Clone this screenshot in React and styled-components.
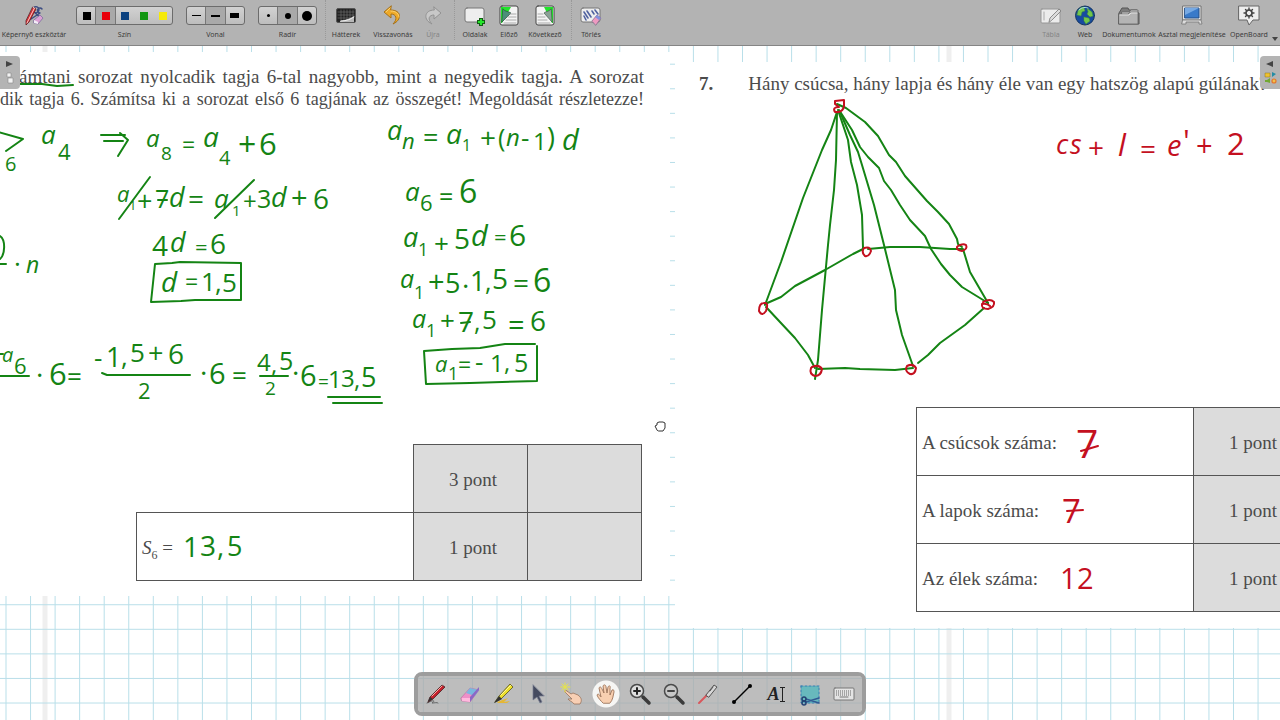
import React from "react";
import styled, { createGlobalStyle, css } from "styled-components";

const INK_GREEN = "#148414";
const INK_RED = "#c4101f";

const GlobalStyle = createGlobalStyle`
  * { box-sizing: border-box; }
  body { margin: 0; overflow: hidden; background: #fff; }
  button { font: inherit; color: inherit; border: 0; padding: 0; background: none; cursor: pointer; }
`;

const Window = styled.div`
  display: flex;
  flex-direction: column;
  height: 100vh;
  font-family: "Noto Sans", "Open Sans", sans-serif;
`;

/* top toolbar */
const TopBar = styled.header`
  display: flex;
  flex: none;
  height: 46px;
  padding-top: 5px;
  background: #b3b3b3;
  border-bottom: 1px solid #858585;
`;

const BarItems = styled.div`
  display: flex;
  gap: ${(props) => props.$gap || 0}px;
  margin-left: ${(props) => (props.$end ? "auto" : "0")};
`;

const ToolButton = styled.button`
  display: flex;
  flex-direction: column;
  align-items: center;
  width: ${(props) => props.$width}px;
  font-size: 7px;
  line-height: 10px;
  white-space: nowrap;
  color: #3c3c3c;
  svg {
    width: 22px;
    height: 22px;
    margin-bottom: 3px;
  }
  &:disabled {
    color: #858585;
    cursor: default;
  }
`;

const Separator = styled.div`
  width: 1px;
  height: 40px;
  margin-top: -5px;
  margin-left: ${(props) => props.$space}px;
  border-left: 1px dotted #999;
`;

const Picker = styled.div`
  display: flex;
  flex-direction: column;
  align-items: center;
  gap: 5px;
  margin-left: 13px;
  padding-top: 1px;
  font-size: 7px;
  line-height: 10px;
  color: #3c3c3c;
  &:first-of-type {
    margin-left: 8px;
  }
`;

const PickerRow = styled.div`
  display: flex;
  height: 19px;
  border: 1px solid #6c6c6c;
  border-radius: 3px;
  background: linear-gradient(#d2d2d2, #bdbdbd);
  overflow: hidden;
`;

const PickerButton = styled.button`
  display: flex;
  align-items: center;
  justify-content: center;
  width: 19px;
  ${(props) =>
    props["aria-pressed"] &&
    css`
      background: #a9a9a9;
      box-shadow: 0 0 0 1px #777;
    `}
`;

const Mark = styled.span`
  width: ${(props) => props.$w}px;
  height: ${(props) => props.$h}px;
  border-radius: ${(props) => (props.$round ? "50%" : "0")};
  background: ${(props) => props.$color || "#000"};
`;

const MenuArrow = styled.button`
  display: flex;
  align-items: center;
  align-self: flex-end;
  width: 8px;
  height: 12px;
  svg { width: 6px; height: 5px; }
`;

/* board */
const Board = styled.main`
  position: relative;
  flex: 1;
  min-height: 0;
  overflow: hidden;
`;

const Layer = styled.svg`
  position: absolute;
  inset: 0;
  width: 100%;
  height: 100%;
  pointer-events: none;
`;

const Pages = styled.div`
  position: relative;
  display: flex;
  align-items: flex-start;
  gap: 5px;
  font-family: "Liberation Serif", "Times New Roman", serif;
  font-size: 19px;
  line-height: 22px;
  color: #4b4b4b;
`;

const Page = styled.section`
  display: flex;
  flex-direction: column;
  min-width: 0;
  background: #fff;
`;

const LeftPage = styled(Page)`
  flex: 0 0 670px;
  margin-top: 6px;
  padding: 14px 28px 15px 0;
`;

const RightPage = styled(Page)`
  flex: 1 0 605px;
  margin-top: 16px;
  padding: 11px 0 16px 24px;
`;

const Line = styled.p`
  margin: 0 -2px 0 ${(props) => props.$indent || 0}px;
  font-size: ${(props) => props.$size}px;
  white-space: nowrap;
  text-align: justify;
  text-align-last: justify;
`;

const Question = styled.p`
  display: flex;
  gap: 35px;
  margin: 0;
  white-space: nowrap;
`;

const ScoreTable = styled.table`
  border-collapse: collapse;
  table-layout: fixed;
  flex: none;
  align-self: ${(props) => props.$align};
  width: 506px;
  margin: ${(props) => props.$margin};
`;

const Cell = styled.td`
  width: ${(props) => (props.$wide ? 277 : 114)}px;
  height: 68px;
  padding: 2px 0 0 5px;
  border: 1px solid #555;
  background: ${(props) => (props.$wide ? "#fff" : "#dcdcdc")};
  text-align: ${(props) => (props.$wide ? "left" : "center")};
  ${(props) =>
    props.$blank &&
    css`
      border-color: transparent #555 #555 transparent;
    `}
  sub {
    font-size: 12px;
    line-height: 0;
  }
`;

const Handwriting = styled.text`
  font-family: "Open Sans", "Noto Sans", sans-serif;
  fill: ${(props) => props.$color};
  tspan.letter { font-style: italic; }
`;

const SideTab = styled.button`
  position: absolute;
  top: 10px;
  ${(props) => props.$side}: 0;
  width: 20px;
  height: 33px;
  border-radius: ${(props) => (props.$side === "left" ? "0 4px 4px 0" : "4px 0 0 4px")};
  background: #b4b4b4;
  svg { display: block; width: 20px; height: 33px; }
`;

const Palette = styled.nav`
  position: absolute;
  bottom: 4px;
  left: 50%;
  transform: translateX(-50%);
  display: flex;
  align-items: center;
  height: 44px;
  padding: 0 1px;
  border: 4px solid #9d9d9d;
  border-radius: 8px;
  background: rgba(170, 170, 170, 0.78);
  background-clip: padding-box;
`;

const PaletteButton = styled.button`
  display: flex;
  align-items: center;
  justify-content: center;
  width: 34px;
  height: 34px;
  svg { width: 24px; height: 24px; }
  ${(props) =>
    props["aria-pressed"] &&
    css`
      background: radial-gradient(circle, #f6f6f4 13px, transparent 14px);
    `}
`;

const Icon = ({ children, size = 22 }) => (
  <svg viewBox={`0 0 ${size} ${size}`} fill="none" strokeLinecap="round" strokeLinejoin="round" aria-hidden="true">
    {children}
  </svg>
);

const icons = {
  kit: (
    <Icon>
      <path d="M10 4a3 3 0 1 1 1 3L18 13M19 4a2.500 2.500 0 1 0-2 4L8 14" stroke="#3c4c82" strokeWidth="1.500" />
      <path d="M10 2 13 4 6 17 3 20 3 16Z" fill="#d9262e" stroke="#5b2024" strokeWidth=".8" />
      <path d="M10 2 11.500 3 4 18" stroke="#f5d6cf" strokeWidth="1" />
      <path d="m11 15 6-5 3 3-5 6-4-1Z" fill="#dba0d4" stroke="#76659b" strokeWidth=".7" />
      <path d="m11 15 4 2 0 2-4-1Z" fill="#f3eef6" />
    </Icon>
  ),
  backgrounds: (
    <Icon>
      <rect x="1.500" y="3.500" width="19" height="14" rx="1.500" fill="#222" stroke="#555" />
      <path d="M3 7h16M3 10h16M3 13h16M6 5v11M9 5v11M12 5v11M15 5v11M18 5v11" stroke="#777" strokeWidth=".6" />
      <path d="M5 16C10 15 14 14 19 11v6H5Z" fill="#b8b8b8" />
      <path d="M6 16c6 0 10-2 13-4" stroke="#eee" />
    </Icon>
  ),
  undo: (
    <Icon>
      <path d="M9 1 2 7l7 6V9c5 0 7 5 2 10 9-4 9-14-2-14Z" fill="#efaa29" stroke="#a5711a" strokeWidth="1" />
      <path d="M8 3 4 7M9 6c5 0 8 3 8 6" stroke="#ffdc83" strokeWidth=".8" />
    </Icon>
  ),
  redo: (
    <Icon>
      <path d="m12 2 7 6-7 6v-4c-5 0-7 4-2 9C1 15 2 5 12 5Z" fill="#c8c8c8" stroke="#929292" strokeWidth="1" />
    </Icon>
  ),
  pages: (
    <Icon>
      <rect x="1" y="3" width="19" height="14" rx="2" fill="#eee" stroke="#777" />
      <path d="M17 13v8M13 17h8" stroke="#145c14" strokeWidth="4" strokeLinecap="butt" />
      <path d="M17 14v6M14 17h6" stroke="#25e62c" strokeWidth="2" strokeLinecap="butt" />
    </Icon>
  ),
  previous: (
    <Icon>
      <rect x="2" y="1" width="18" height="19" rx="2" fill="#f4f4f4" stroke="#454545" />
      <path d="M3 2h10L4 18H3Z" fill="#20e52a" />
      <path d="M5 4c2 3 5 2 8 4L4 17Z" fill="#4c8e79" stroke="#294a3b" strokeWidth=".7" />
      <path d="M12 9h6M10 12h8M8 15h10M6 18h12" stroke="#aaa" />
    </Icon>
  ),
  next: (
    <Icon>
      <rect x="2" y="1" width="18" height="19" rx="2" fill="#f4f4f4" stroke="#454545" />
      <path d="M10 2h9v16h-1Z" fill="#20e52a" />
      <path d="M17 4c-2 3-5 2-7 4l8 9Z" fill="#8ba096" stroke="#46564e" strokeWidth=".7" />
      <path d="M4 9h5M4 12h7M4 15h9M4 18h12" stroke="#aaa" />
    </Icon>
  ),
  erase: (
    <Icon>
      <rect x="1" y="3" width="19" height="14" rx="2" fill="#eee" stroke="#777" />
      <path d="m4 7 4 6M7 6l4 6M12 6l2 3M4 11l2 4M15 5l3 4" stroke="#5062a0" strokeWidth="1.600" />
      <path d="m12 16 5-6 4 3-5 7Z" fill="#ed9ac0" stroke="#7d6287" strokeWidth=".7" />
      <path d="m17 10 4 3-2 2-4-3Z" fill="#8192dc" />
    </Icon>
  ),
  board: (
    <Icon>
      <rect x="1" y="4" width="19" height="14" rx="1" fill="#ececec" stroke="#969696" />
      <path d="M4 7v8" stroke="#aaa" />
      <path d="m9 17 1-4L19 4l2 2-9 9Z" fill="#ddd" stroke="#777" strokeWidth=".8" />
    </Icon>
  ),
  web: (
    <Icon>
      <circle cx="11" cy="10.500" r="9.500" fill="#174aa0" stroke="#16375f" />
      <path d="M4 6c2-4 5-4 6-4l1 4-3 1-1 4-4-1ZM13 3l5 4 1 4-3 1-3-3 1-2ZM10 12l5 1 1 3-4 3-2-3Z" fill="#72c64a" stroke="#3f8b3c" strokeWidth=".5" />
      <path d="M5 5c3-3 7-3 9-2" stroke="#a8d9ef" strokeWidth="1" />
    </Icon>
  ),
  documents: (
    <Icon>
      <path d="M1 8 4 3h6l1 2h8v3l2 0v11H1Z" fill="#7c7c7c" stroke="#555" />
      <path d="M4 7h7l2-2h7v12H4Z" fill="#c9c9c9" stroke="#666" strokeWidth=".8" />
      <path d="M1 9h9l2-2h8v12H1Z" fill="#b4b4b4" stroke="#666" strokeWidth=".8" />
      <path d="M2 10h9l2-2h6" stroke="#e2e2e2" />
    </Icon>
  ),
  desktop: (
    <Icon>
      <path d="M2 1h18v14H2Z" fill="#eee" stroke="#737373" />
      <path d="M4 3h14v10H4Z" fill="#397ac9" stroke="#244f86" />
      <path d="M4 3h14L4 10Z" fill="#77a9e3" />
      <path d="M2 15h18l1 4h-3v-2H5v2H1Z" fill="#ddd" stroke="#777" strokeWidth=".8" />
    </Icon>
  ),
  openboard: (
    <Icon>
      <path d="M1 1h20v14h-6l-4 5-2-5H1Z" fill="#eee" stroke="#666" />
      <circle cx="11" cy="8" r="3" stroke="#444" strokeWidth="1.500" />
      <path d="M11 3v2M11 11v2M6 8h2M14 8h2M7.500 4.500l1.500 1.500M13 10l1.500 1.500M14.500 4.500 13 6M9 10l-1.500 1.500" stroke="#444" strokeWidth="1.400" />
    </Icon>
  ),
  pen: (
    <Icon size={24}>
      <path d="M3 21c6-3 9-3 5 0 3 0 5-1 6 0" stroke="#666" />
      <path d="m4 20 2-5L18 3l3 2L9 17Z" fill="#c3202c" stroke="#462326" strokeWidth=".8" />
      <path d="M8 14 18 4" stroke="#ffaaa4" />
      <path d="m4 20 2-5 3 2Z" fill="#333" />
    </Icon>
  ),
  eraser: (
    <Icon size={24}>
      <path d="m3 16 9-10 9 2-9 12-8-1Z" fill="#ee8fc8" stroke="#b96c9d" strokeWidth=".6" />
      <path d="m12 6 9 2-4 6-9-3Z" fill="#79b7df" />
      <path d="m21 8-9 12v-5l9-10Z" fill="#8c67c5" />
      <path d="m4 16 8 0v4l-8-1Z" fill="#ffb9de" />
    </Icon>
  ),
  marker: (
    <Icon size={24}>
      <path d="m5 20 11-4-4 4 6-1-3 2H6Z" fill="#e5b735" />
      <path d="m3 20 4-6L18 2l3 3L9 17Z" fill="#eee029" stroke="#55521a" strokeWidth=".8" />
      <path d="m2 21 5-7 3 3Z" fill="#333" />
      <path d="M9 13 19 3" stroke="#fff89a" />
    </Icon>
  ),
  arrow: (
    <Icon size={24}>
      <path d="M7 3v15l4-3 3 6 2-1-3-6h5Z" fill="#454b60" stroke="#777d90" strokeWidth=".7" />
    </Icon>
  ),
  pointer: (
    <Icon size={24}>
      <path d="m7 9 4 3 2-1 5 2c4 3 4 6 2 9h-6c-2-3-5-3-6-5l4 0L5 10c-1-2 1-2 2-1Z" fill="#f8cfb4" stroke="#98725c" strokeWidth=".8" />
      <path d="M5 1v9M1 5h9M2 2l6 6M8 2 2 8" stroke="#e8e543" strokeWidth="1" />
    </Icon>
  ),
  hand: (
    <Icon size={24}>
      <path d="M9 21c-2-2-5-5-6-8 1-2 3 0 4 2L5 6c1-2 2-1 3 1l2 4L9 4c1-2 3-1 3 1l1 6 1-6c1-2 3-1 2 1v7l2-5c2-1 2 1 2 2-1 4-1 8-4 11Z" fill="#f8cfb0" stroke="#9c7358" strokeWidth=".9" />
    </Icon>
  ),
  zoomIn: (
    <Icon size={24}>
      <path d="m15 15 6 6" stroke="#3b3b3b" strokeWidth="3.500" />
      <circle cx="9" cy="9" r="6.500" fill="#dedede" stroke="#4a4a4a" strokeWidth="1.500" />
      <path d="M9 6v6M6 9h6" stroke="#222" strokeWidth="2" />
    </Icon>
  ),
  zoomOut: (
    <Icon size={24}>
      <path d="m15 15 6 6" stroke="#3b3b3b" strokeWidth="3.500" />
      <circle cx="9" cy="9" r="6.500" fill="#c8c8c8" stroke="#4a4a4a" strokeWidth="1.500" />
      <path d="M6 9h6" stroke="#444" strokeWidth="2" />
    </Icon>
  ),
  laser: (
    <Icon size={24}>
      <path d="m3 21 9-9" stroke="#d9575c" strokeWidth="2" />
      <path d="m10 13 8-10 3 2-8 10Z" fill="#d8d8d8" stroke="#555" />
      <path d="m14 9 3-4" stroke="#555" />
    </Icon>
  ),
  line: (
    <Icon size={24}>
      <path d="M4 20 20 4" stroke="#000" strokeWidth="1.500" />
      <circle cx="4" cy="20" r="2" fill="#000" />
      <circle cx="20" cy="4" r="2" fill="#000" />
    </Icon>
  ),
  capture: (
    <Icon size={24}>
      <rect x="3" y="4" width="18" height="17" fill="#68b9bd" stroke="#347fb2" strokeDasharray="2 2" />
      <path d="m8 17 13 4M8 20l13-4" stroke="#325a93" strokeWidth="1.600" />
      <circle cx="6" cy="17" r="2" stroke="#244273" strokeWidth="1.500" />
      <circle cx="6" cy="21" r="2" stroke="#244273" strokeWidth="1.500" />
    </Icon>
  ),
  keyboard: (
    <Icon size={24}>
      <rect x="2" y="6" width="20" height="12" rx="1" fill="#e4e4e4" stroke="#777" />
      <path d="M4 9h16M4 11h16M4 13h16" stroke="#666" strokeWidth="1.200" strokeDasharray="1 1" strokeLinecap="butt" />
      <path d="M8 15h8" stroke="#777" />
    </Icon>
  ),
};

const TextToolLabel = styled.span`
  display: flex;
  align-items: center;
  font: italic bold 18px/24px "Liberation Serif", serif;
  color: #222;
  &::after {
    content: "";
    width: 5px;
    height: 15px;
    background: linear-gradient(#222, #222) center / 1px 100% no-repeat,
      linear-gradient(#222, #222) top / 100% 1px no-repeat,
      linear-gradient(#222, #222) bottom / 100% 1px no-repeat;
  }
`;

const colors = [
  ["Fekete", "#000"],
  ["Piros", "#e8000b"],
  ["Kék", "#0b417f"],
  ["Zöld", "#119611"],
  ["Sárga", "#f5ea0a"],
];

const paletteTools = [
  ["Toll", icons.pen],
  ["Radír", icons.eraser],
  ["Kiemelő", icons.marker],
  ["Kijelölés", icons.arrow],
  ["Interakció", icons.pointer],
  ["Görgetés", icons.hand],
  ["Nagyítás", icons.zoomIn],
  ["Kicsinyítés", icons.zoomOut],
  ["Lézer", icons.laser],
  ["Vonal", icons.line],
  ["Szöveg", <TextToolLabel key="a">A</TextToolLabel>],
  ["Kivágás", icons.capture],
  ["Billentyűzet", icons.keyboard],
];

// each formula is a list of [x, baseline, size, characters]
const greenNotes = [
  [[5, 171, 20, "6"], [41, 144, 26, "a"], [58, 160, 22, "4"]],
  [[146, 147, 24, "a"], [161, 160, 19, "8"], [182, 153, 23, "="], [203, 147, 28, "a"], [219, 165, 20, "4"], [238, 156, 32, "+"], [259, 155, 31, "6"]],
  [[117, 202, 22, "a"], [129, 210, 13, "1"], [137, 211, 27, "+"], [155, 208, 25, "7"], [169, 207, 27, "d"], [188, 209, 28, "="], [214, 208, 26, "a"], [232, 216, 15, "1"], [243, 210, 24, "+"], [257, 208, 25, "3"], [271, 207, 27, "d"], [291, 208, 29, "+"], [313, 209, 28, "6"]],
  [[152, 256, 28, "4"], [170, 252, 27, "d"], [195, 255, 22, "="], [210, 254, 28, "6"]],
  [[161, 292, 28, "d"], [185, 290, 23, "="], [201, 291, 26, "1"], [215, 292, 26, ","], [222, 292, 26, "5"]],
  [[14, 273, 26, "·"], [26, 273, 23, "n"]],
  [[2, 362, 20, "a"], [14, 374, 22, "6"], [36, 385, 28, "·"], [49, 385, 31, "6"], [67, 386, 26, "="]],
  [[94, 367, 26, "-"], [106, 367, 27, "1"], [121, 366, 26, ","], [130, 362, 26, "5"], [148, 363, 27, "+"], [168, 364, 28, "6"]],
  [[138, 399, 22, "2"]],
  [[200, 383, 28, "·"], [209, 384, 29, "6"], [232, 385, 26, "="]],
  [[257, 371, 24, "4"], [271, 373, 24, ","], [279, 370, 25, "5"]],
  [[265, 395, 19, "2"]],
  [[292, 383, 28, "·"], [300, 386, 29, "6"], [318, 388, 19, "="], [328, 388, 24, "1"], [341, 387, 24, "3"], [354, 388, 24, ","], [361, 387, 27, "5"]],
  [[387, 140, 27, "a"], [402, 149, 22, "n"], [423, 147, 27, "="], [446, 144, 28, "a"], [462, 151, 16, "1"], [480, 148, 28, "+"], [498, 147, 25, "("], [506, 146, 24, "n"], [521, 147, 26, "-"], [533, 150, 24, "1"], [547, 147, 27, ")"], [562, 150, 29, "d"]],
  [[405, 201, 26, "a"], [420, 211, 22, "6"], [439, 206, 25, "="], [459, 203, 32, "6"]],
  [[403, 247, 27, "a"], [418, 256, 18, "1"], [434, 253, 26, "+"], [454, 249, 28, "5"], [471, 246, 29, "d"], [494, 245, 22, "="], [509, 246, 30, "6"]],
  [[400, 288, 25, "a"], [414, 299, 18, "1"], [428, 292, 29, "+"], [445, 293, 27, "5"], [462, 296, 28, "·"], [470, 291, 27, "1"], [485, 291, 25, ","], [492, 289, 28, "5"], [513, 293, 28, "="], [533, 292, 32, "6"]],
  [[412, 328, 25, "a"], [426, 337, 18, "1"], [440, 330, 26, "+"], [458, 332, 28, "7"], [474, 331, 25, ","], [482, 329, 26, "5"], [508, 335, 29, "="], [530, 331, 28, "6"]],
  [[435, 372, 22, "a"], [448, 380, 18, "1"], [458, 373, 23, "="], [475, 371, 26, "-"], [490, 372, 24, "1"], [504, 371, 24, ","], [514, 372, 25, "5"]],
  [[183, 557, 28, "1"], [200, 556, 28, "3"], [217, 556, 28, ","], [227, 556, 27, "5"]],
];

const redNotes = [
  [[1056, 154, 27, "c"], [1070, 154, 27, "s"], [1088, 158, 28, "+"], [1118, 156, 31, "l"], [1140, 159, 28, "="], [1167, 156, 29, "e"], [1183, 152, 31, "'"], [1196, 156, 29, "+"], [1227, 155, 31, "2"]],
  [[1076, 458, 39, "7"]],
  [[1062, 523, 33, "7"]],
  [[1060, 589, 29, "1"], [1077, 589, 29, "2"]],
];

const greenStrokes = [
  "M20 84 42 84 57 86 73 85",
  "M-2 132 23 139 6 151",
  "M101 135H125M104 141H123M120 133l8 7-10 16",
  "M150 177 119 219M254 180 215 218",
  "M158 200h9M461 323l9-1",
  "M155 264 172 263 180 262 241 263V300L195 300 181 301 151 302Z",
  "M0 236c6 4 5 19 0 23M0 264h6",
  "M0 354h3M0 376h29M102 373l5 2h83M260 376h28",
  "M328 397h52M333 403h49",
  "M424 351 452 349 480 348 505 344 535 344M537 346V381L470 383 426 384 424 351",
  "M837 112 831 130 822 150 803 198 781 262 765 305",
  "M837 112 836 160 834 190 830 225 828 245 822 310 818 360 815 379",
  "M838 110 848 140 851 162 857 185 862 215 863 248",
  "M840 112 850 135 858 152 862 165 874 205 884 245 895 290 896 310 902 335 913 366",
  "M839 110 852 130 860 147 868 157 879 168 884 181 891 190 900 205 910 220 925 236 931 249 941 264 950 275 962 287 988 303",
  "M837 104 846 108 865 122 878 136 889 155 896 162 905 176 927 201 938 212 949 224 957 239 958 244 962 247",
  "M765 304 781 297 795 286 825 270 853 254 863 249",
  "M868 249 890 247 920 247 950 249 963 249 970 272 988 303",
  "M984 308 965 325 940 343 928 355 918 363",
  "M913 368 895 370 860 369 845 368 818 369",
  "M766 307 780 322 795 338 808 355 815 368",
];

const redStrokes = [
  "M835 101l9-1v6q-1 7-9 6-3-5 4-5l-4-3Z",
  "M764 303q-5 0-5 8 3 6 7 0 3-9-2-8Z",
  "M812 367q7-3 10 2-1 7-7 7-6-2-4-8Z",
  "M907 366q6-3 9 2-1 7-6 6-6-3-3-8Z",
  "M864 248q6-2 7 3-2 6-6 5-4-4-1-8Z",
  "M958 246q5-3 8-1 2 4-4 6-6-1-5-4Z",
  "M983 302q7-4 11 0 1 5-6 7-7 0-6-5 5-1 8 2",
  "M1081 451 1098 446M1067 511 1083 510",
];

const columns = Array.from({ length: 80 }, (_, i) => 6 + i * 24.55);
const rows = Array.from({ length: 50 }, (_, i) => 64.2 + i * 24.57);

const Formula = ({ parts, color }) => (
  <Handwriting $color={color}>
    {parts.map(([x, y, size, value]) => (
      <tspan key={x} x={x} y={y} fontSize={size} className={/[a-z]/.test(value) ? "letter" : undefined}>
        {value}
      </tspan>
    ))}
  </Handwriting>
);

// canvas coordinates start at the window's top edge, under the toolbar
const Grid = () => (
  <Layer aria-hidden="true">
    <g transform="translate(0 -46)">
      <path d="M45 46V2000M949 46V2000" stroke="#efefef" strokeWidth="5" />
      {columns.map((x) => (
        <path key={x} d={`M${x} 46V2000`} stroke="#b9dfe9" />
      ))}
      {rows.map((y) => (
        <path key={y} d={`M0 ${y}H3000`} stroke="#b9dfe9" />
      ))}
    </g>
  </Layer>
);

const Ink = () => (
  <Layer fill="none" strokeLinecap="round" strokeLinejoin="round">
    <g transform="translate(0 -46)">
      <g stroke={INK_GREEN} strokeWidth="2">
        {greenStrokes.map((d) => <path key={d} d={d} />)}
      </g>
      <g stroke={INK_RED} strokeWidth="2">
        {redStrokes.map((d) => <path key={d} d={d} />)}
      </g>
      {greenNotes.map((parts, i) => <Formula key={i} parts={parts} color={INK_GREEN} />)}
      {redNotes.map((parts, i) => <Formula key={i} parts={parts} color={INK_RED} />)}
      {/* grab cursor */}
      <path d="M657 430l-2-4 2-1v-2l2-1 2 0 2 0 2 1v5l-2 3h-4Z" fill="#fff" stroke="#333" strokeWidth="1" />
    </g>
  </Layer>
);

const Tool = ({ icon, label, width, disabled }) => (
  <ToolButton $width={width} disabled={disabled}>
    {icons[icon]}
    {label}
  </ToolButton>
);

const App = () => (
  <Window>
    <GlobalStyle />
    <TopBar>
      <BarItems>
        <Tool icon="kit" label="Képernyő eszköztár" width={68} />
        <Picker>
          <PickerRow>
            {colors.map(([name, color]) => (
              <PickerButton key={name} aria-label={name} aria-pressed={name === "Piros"}>
                <Mark $w={8} $h={8} $color={color} />
              </PickerButton>
            ))}
          </PickerRow>
          Szín
        </Picker>
        <Picker>
          <PickerRow>
            {[1, 2, 5].map((h) => (
              <PickerButton key={h} aria-label={`Vonal ${h}`} aria-pressed={h === 2}>
                <Mark $w={9} $h={h} />
              </PickerButton>
            ))}
          </PickerRow>
          Vonal
        </Picker>
        <Picker>
          <PickerRow>
            {[3, 6, 10].map((d) => (
              <PickerButton key={d} aria-label={`Radír ${d}`} aria-pressed={d === 6}>
                <Mark $w={d} $h={d} $round />
              </PickerButton>
            ))}
          </PickerRow>
          Radír
        </Picker>
        <Separator $space={8} />
        <Tool icon="backgrounds" label="Hátterek" width={40} />
        <Tool icon="undo" label="Visszavonás" width={54} />
        <Tool icon="redo" label="Újra" width={26} disabled />
        <Separator $space={8} />
        <Tool icon="pages" label="Oldalak" width={40} />
        <Tool icon="previous" label="Előző" width={28} />
        <Tool icon="next" label="Következő" width={44} />
        <Separator $space={4} />
        <Tool icon="erase" label="Törlés" width={38} />
      </BarItems>
      <BarItems $end $gap={4}>
        <Tool icon="board" label="Tábla" width={30} disabled />
        <Tool icon="web" label="Web" width={30} />
        <Tool icon="documents" label="Dokumentumok" width={50} />
        <Tool icon="desktop" label="Asztal megjelenítése" width={68} />
        <Tool icon="openboard" label="OpenBoard" width={38} />
        <MenuArrow aria-label="Menü">
          <svg viewBox="0 0 6 5"><path d="M0 0h6L3 4Z" fill="#444" /></svg>
        </MenuArrow>
      </BarItems>
    </TopBar>

    <Board>
      <Grid />
      <Pages>
        <LeftPage>
          <Line $indent={19} $size={19}>ámtani sorozat nyolcadik tagja 6-tal nagyobb, mint a negyedik tagja. A sorozat</Line>
          <Line $size={18}>dik tagja 6. Számítsa ki a sorozat első 6 tagjának az összegét! Megoldását részletezze!</Line>
          <ScoreTable $align="flex-end" $margin="334px 0 0">
            <tbody>
              <tr>
                <Cell $wide $blank />
                <Cell>3 pont</Cell>
                <Cell />
              </tr>
              <tr>
                <Cell $wide><i>S</i><sub>6</sub> =</Cell>
                <Cell>1 pont</Cell>
                <Cell />
              </tr>
            </tbody>
          </ScoreTable>
        </LeftPage>
        <RightPage>
          <Question>
            <b>7.</b>
            <span>Hány csúcsa, hány lapja és hány éle van egy hatszög alapú gúlának?</span>
          </Question>
          <ScoreTable $align="flex-start" $margin="312px 0 0 217px">
            <tbody>
              {["A csúcsok száma:", "A lapok száma:", "Az élek száma:"].map((label) => (
                <tr key={label}>
                  <Cell $wide>{label}</Cell>
                  <Cell>1 pont</Cell>
                  <Cell />
                </tr>
              ))}
            </tbody>
          </ScoreTable>
        </RightPage>
      </Pages>
      <Ink />

      <SideTab $side="left" aria-label="Oldalak panel">
        <svg viewBox="0 0 20 33">
          <path d="M6 5v6l7-3Z" fill="#444" />
          <path d="M7 17h4v4H7ZM8 22h5v5H8Z" fill="#f3f3f3" stroke="#888" strokeWidth=".6" />
        </svg>
      </SideTab>
      <SideTab $side="right" aria-label="Könyvtár panel">
        <svg viewBox="0 0 20 33">
          <path d="M13 5v6L6 8Z" fill="#444" />
          <path d="M5 17h5v4H5Z" fill="#efc22e" stroke="#8b7424" strokeWidth=".5" />
          <path d="M12 16l4 2-4 3Z" fill="#238ca5" />
          <path d="M5 24h2l3-2v5l-3-1H5Z" fill="#72a832" />
          <circle cx="14" cy="25" r="2" fill="#f0c24a" stroke="#e5762c" strokeWidth="1.200" />
        </svg>
      </SideTab>

      <Palette aria-label="Eszközök">
        {paletteTools.map(([name, icon]) => (
          <PaletteButton key={name} aria-label={name} aria-pressed={name === "Görgetés"}>
            {icon}
          </PaletteButton>
        ))}
      </Palette>
    </Board>
  </Window>
);

export default App;
